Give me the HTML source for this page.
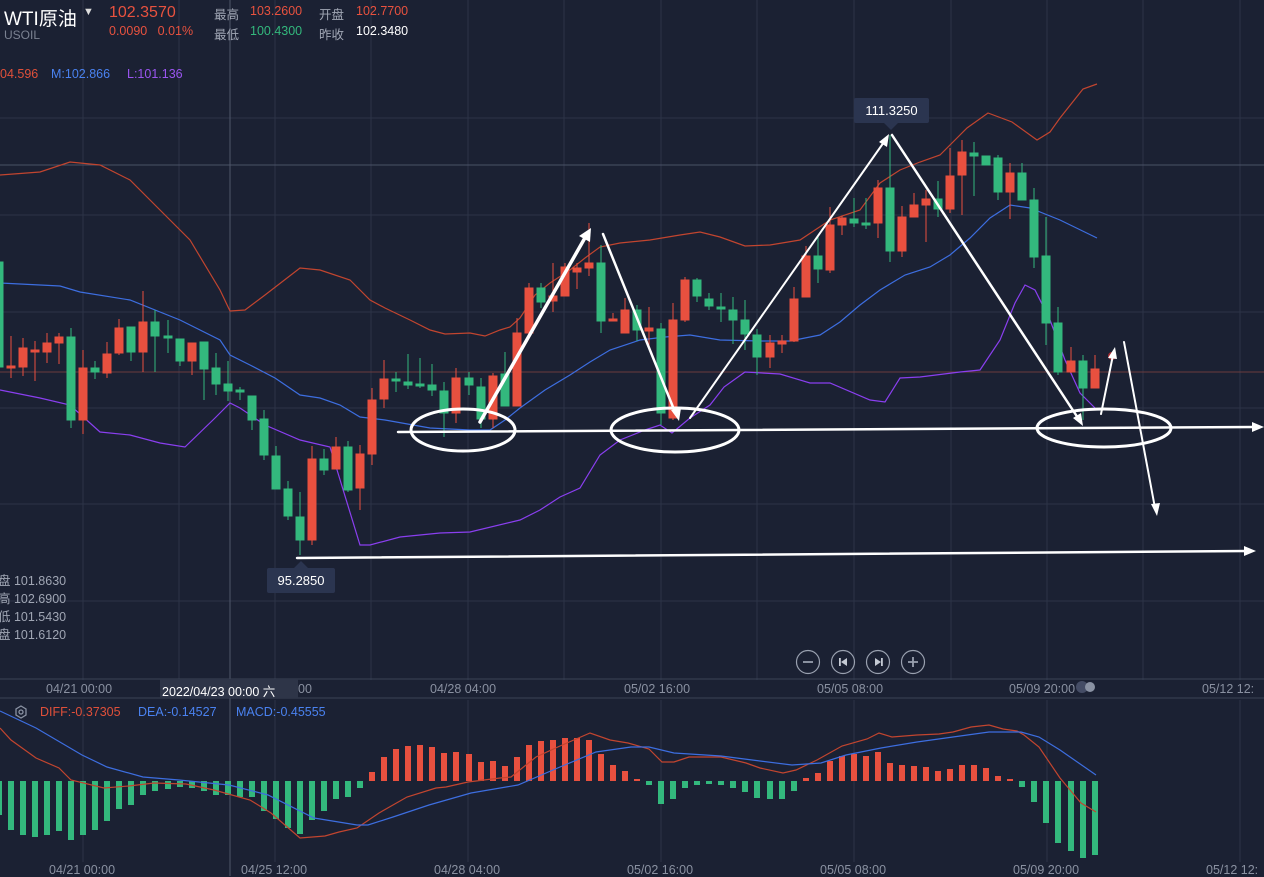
<!DOCTYPE html>
<html><head><meta charset="utf-8"><style>
html,body{margin:0;padding:0;background:#1b2133;}
body{width:1264px;height:876px;overflow:hidden;position:relative;font-family:"Liberation Sans","Noto Sans CJK SC",sans-serif;}
svg{position:absolute;left:0;top:0;}
.t{position:absolute;white-space:nowrap;font-size:13px;}
</style></head><body>
<svg width="1264" height="876" viewBox="0 0 1264 876">
<rect width="1264" height="876" fill="#1b2133"/>
<g stroke="#2c3447" stroke-width="1">
<path d="M83 0V680M179 0V680M275 0V680M371 0V680M468 0V680M564 0V680M661 0V680M757 0V680M854 0V680M951 0V680M1047 0V680M1143 0V680M1240 0V680"/>
<path d="M0 118H1264M0 215H1264M0 312H1264M0 408H1264M0 504H1264M0 601H1264"/>
<path d="M83 700V862M275 700V862M468 700V862M661 700V862M854 700V862M1047 700V862M1240 700V862"/>
</g>
<path d="M0 165H1264" stroke="#4a5266"/>
<path d="M230 0V876" stroke="#4f566a"/>
<path d="M0 372H1264" stroke="#6b3b3e"/>
<path d="M0 679H1264M0 698H1264" stroke="#3b4356"/>
<!-- bands -->
<polyline fill="none" stroke="#c2452f" stroke-width="1.2" points="0,175 40,172 70,162 100,165 130,180 160,210 190,240 220,290 230,311 245,310 265,295 300,268 320,270 350,280 370,300 385,308 410,320 430,330 445,334 470,333 485,336 500,330 510,327 520,318 535,295 550,283 570,270 585,258 600,247 620,243 650,240 680,235 700,232 720,237 745,246 770,245 800,240 830,220 860,210 880,183 900,170 920,162 940,155 955,140 967,128 988,113 1012,122 1037,140 1050,132 1060,118 1083,89 1097,84"/>
<polyline fill="none" stroke="#3d6ee0" stroke-width="1.2" points="0,283 60,286 80,292 130,300 180,320 220,340 230,355 250,365 275,378 300,395 320,398 340,405 360,417 385,420 430,428 470,430 490,430 505,420 520,408 545,390 570,375 590,362 610,350 640,340 665,337 690,335 720,340 760,341 790,341 820,335 840,322 860,305 880,290 905,275 930,267 950,255 970,238 990,218 1010,205 1030,208 1060,220 1097,238"/>
<polyline fill="none" stroke="#8a3ff0" stroke-width="1.2" points="0,390 40,398 70,405 100,432 130,435 160,443 185,447 215,418 230,403 240,408 265,425 300,440 330,447 360,545 370,545 400,537 440,533 470,532 520,520 540,510 560,497 580,488 600,455 620,440 645,430 660,425 672,433 690,418 710,405 724,387 745,372 780,374 810,383 830,383 870,400 885,402 900,378 920,377 960,372 980,370 1000,340 1015,303 1025,285 1035,290 1050,320 1065,360 1080,393 1097,410"/>
<!-- candles -->
<g id="c"></g>
<g stroke="#33b87d" fill="#33b87d">
<path d="M-1 255V370M71 328V428M95 361V379M131 327V361M155 310V372M168 320V353M180 339V366M204 342V400M216 353V395M228 361V401M240 387V400M252 396V430M264 410V460M276 446V489M288 481V520M300 492V555M324 449V475M348 441V492M396 372V392M408 354V389M420 358V388M432 364V396M444 382V437M469 372V395M481 378V428M505 352V406M541 283V308M601 245V333M637 305V341M661 323V425M697 278V302M709 293V310M721 293V322M733 297V344M745 300V350M757 329V375M818 237V283M854 198V227M866 198V229M890 135V262M938 181V217M974 142V196M986 156V165M998 155V200M1022 163V200M1034 188V268M1046 217V345M1058 307V375M1083 355V420"/>
<rect x="-5" y="262" width="8" height="105"/><rect x="67" y="337" width="8" height="83"/><rect x="91" y="368" width="8" height="4"/><rect x="127" y="327" width="8" height="25"/><rect x="151" y="322" width="8" height="14"/><rect x="164" y="336" width="8" height="2"/><rect x="176" y="339" width="8" height="22"/><rect x="200" y="342" width="8" height="27"/><rect x="212" y="368" width="8" height="16"/><rect x="224" y="384" width="8" height="7"/><rect x="236" y="390" width="8" height="2"/><rect x="248" y="396" width="8" height="24"/><rect x="260" y="419" width="8" height="36"/><rect x="272" y="456" width="8" height="33"/><rect x="284" y="489" width="8" height="27"/><rect x="296" y="517" width="8" height="23"/><rect x="320" y="459" width="8" height="11"/><rect x="344" y="447" width="8" height="43"/><rect x="392" y="379" width="8" height="2"/><rect x="404" y="382" width="8" height="3"/><rect x="416" y="384" width="8" height="2"/><rect x="428" y="385" width="8" height="5"/><rect x="440" y="391" width="8" height="22"/><rect x="465" y="378" width="8" height="7"/><rect x="477" y="387" width="8" height="32"/><rect x="501" y="374" width="8" height="32"/><rect x="537" y="288" width="8" height="14"/><rect x="597" y="263" width="8" height="58"/><rect x="633" y="310" width="8" height="20"/><rect x="657" y="329" width="8" height="84"/><rect x="693" y="280" width="8" height="16"/><rect x="705" y="299" width="8" height="7"/><rect x="717" y="307" width="8" height="2"/><rect x="729" y="310" width="8" height="10"/><rect x="741" y="320" width="8" height="14"/><rect x="753" y="335" width="8" height="22"/><rect x="814" y="256" width="8" height="13"/><rect x="850" y="219" width="8" height="4"/><rect x="862" y="223" width="8" height="2"/><rect x="886" y="188" width="8" height="63"/><rect x="934" y="199" width="8" height="10"/><rect x="970" y="153" width="8" height="3"/><rect x="982" y="156" width="8" height="9"/><rect x="994" y="158" width="8" height="34"/><rect x="1018" y="173" width="8" height="27"/><rect x="1030" y="200" width="8" height="57"/><rect x="1042" y="256" width="8" height="67"/><rect x="1054" y="323" width="8" height="49"/><rect x="1079" y="361" width="8" height="27"/>
</g>
<g stroke="#e8503f" fill="#e8503f">
<path d="M11 336V378M23 338V376M35 341V381M47 333V363M59 333V364M83 350V434M107 342V378M119 319V355M143 291V372M192 343V375M312 446V545M336 437V469M360 445V510M372 388V465M384 360V408M456 368V423M493 373V428M517 318V406M529 283V334M553 263V312M565 263V296M577 263V289M589 223V276M613 313V321M625 298V333M649 307V347M673 303V420M685 277V322M770 335V368M782 335V353M794 287V342M806 246V297M830 207V273M842 216V235M878 180V238M902 206V257M914 193V217M926 190V242M950 148V213M962 140V215M1010 163V219M1071 347V373M1095 355V388"/>
<rect x="7" y="366" width="8" height="2"/><rect x="19" y="348" width="8" height="19"/><rect x="31" y="350" width="8" height="2"/><rect x="43" y="343" width="8" height="9"/><rect x="55" y="337" width="8" height="6"/><rect x="79" y="368" width="8" height="52"/><rect x="103" y="354" width="8" height="19"/><rect x="115" y="328" width="8" height="25"/><rect x="139" y="322" width="8" height="30"/><rect x="188" y="343" width="8" height="18"/><rect x="308" y="459" width="8" height="81"/><rect x="332" y="447" width="8" height="22"/><rect x="356" y="454" width="8" height="34"/><rect x="368" y="400" width="8" height="54"/><rect x="380" y="379" width="8" height="20"/><rect x="452" y="378" width="8" height="35"/><rect x="489" y="376" width="8" height="43"/><rect x="513" y="333" width="8" height="73"/><rect x="525" y="288" width="8" height="45"/><rect x="549" y="296" width="8" height="5"/><rect x="561" y="267" width="8" height="29"/><rect x="573" y="268" width="8" height="4"/><rect x="585" y="263" width="8" height="5"/><rect x="609" y="319" width="8" height="2"/><rect x="621" y="310" width="8" height="23"/><rect x="645" y="328" width="8" height="3"/><rect x="669" y="320" width="8" height="98"/><rect x="681" y="280" width="8" height="40"/><rect x="766" y="343" width="8" height="14"/><rect x="778" y="341" width="8" height="3"/><rect x="790" y="299" width="8" height="42"/><rect x="802" y="256" width="8" height="41"/><rect x="826" y="225" width="8" height="45"/><rect x="838" y="218" width="8" height="7"/><rect x="874" y="188" width="8" height="35"/><rect x="898" y="217" width="8" height="34"/><rect x="910" y="205" width="8" height="12"/><rect x="922" y="199" width="8" height="6"/><rect x="946" y="176" width="8" height="33"/><rect x="958" y="152" width="8" height="23"/><rect x="1006" y="173" width="8" height="19"/><rect x="1067" y="361" width="8" height="11"/><rect x="1091" y="369" width="8" height="19"/>
</g>
<circle cx="1112" cy="356" r="4" fill="#ff3030" opacity="0.6"/>
<!-- annotations -->
<g stroke="#ffffff" fill="none" stroke-linecap="round">
<ellipse cx="463" cy="430" rx="52" ry="21" stroke-width="3"/>
<ellipse cx="675" cy="430" rx="64" ry="22" stroke-width="3"/>
<ellipse cx="1104" cy="428" rx="67" ry="19" stroke-width="3"/>
<path d="M398 432L1255 427" stroke-width="2.5"/>
<path d="M297 558L1248 551" stroke-width="2.5"/>
<path d="M480 422L586 236" stroke-width="3.5"/>
<path d="M603 234L675 412" stroke-width="2.5"/>
<path d="M690 418L884 142" stroke-width="2"/>
<path d="M892 135L1078 418" stroke-width="2.5"/>
<path d="M1101 414L1113 355" stroke-width="2"/>
<path d="M1124 342L1155 508" stroke-width="2"/>
</g>
<g fill="#ffffff">
<path d="M1264 427L1252 422L1252 432Z"/>
<path d="M1256 551L1244 546L1244 556Z"/>
<path d="M591 228L579 236L590 242Z"/>
<path d="M679 421L671 410L681 408Z"/>
<path d="M889 134L879 142L887 147Z"/>
<path d="M1083 426L1073 418L1081 413Z"/>
<path d="M1115 347L1108 358L1117 359Z"/>
<path d="M1157 516L1151 504L1160 503Z"/>
</g>
<rect x="854" y="98" width="75" height="25" rx="2" fill="#2b3550"/>
<path d="M884 123L891 130L898 123Z" fill="#2b3550"/>
<rect x="267" y="568" width="68" height="25" rx="2" fill="#2b3550"/>
<path d="M294 568L301 561L308 568Z" fill="#2b3550"/>
<!-- buttons -->
<g stroke="#9aa1b0" stroke-width="1.2" fill="none">
<circle cx="808" cy="662" r="11.5"/><circle cx="843" cy="662" r="11.5"/><circle cx="878" cy="662" r="11.5"/><circle cx="913" cy="662" r="11.5"/>
<path d="M803 662H813M908 662H918M913 657V667" stroke-width="1.8"/>
</g>
<g fill="#c5cad4"><rect x="839" y="658" width="1.8" height="8"/><path d="M847 658V666L841 662Z"/><rect x="881" y="658" width="1.8" height="8"/><path d="M875 658V666L881 662Z"/></g>
<circle cx="1082" cy="687" r="6" fill="#55607a" opacity="0.7"/><circle cx="1090" cy="687" r="5" fill="#8a92a3"/>
<!-- MACD -->
<g fill="#33b87d">
<rect x="-4" y="781" width="6" height="34"/><rect x="8" y="781" width="6" height="49"/><rect x="20" y="781" width="6" height="54"/><rect x="32" y="781" width="6" height="56"/><rect x="44" y="781" width="6" height="54"/><rect x="56" y="781" width="6" height="50"/><rect x="68" y="781" width="6" height="59"/><rect x="80" y="781" width="6" height="54"/><rect x="92" y="781" width="6" height="49"/><rect x="104" y="781" width="6" height="40"/><rect x="116" y="781" width="6" height="28"/><rect x="128" y="781" width="6" height="24"/><rect x="140" y="781" width="6" height="14"/><rect x="152" y="781" width="6" height="10"/><rect x="165" y="781" width="6" height="8"/><rect x="177" y="781" width="6" height="6"/><rect x="189" y="781" width="6" height="7"/><rect x="201" y="781" width="6" height="10"/><rect x="213" y="781" width="6" height="14"/><rect x="225" y="781" width="6" height="14"/><rect x="237" y="781" width="6" height="16"/><rect x="249" y="781" width="6" height="16"/><rect x="261" y="781" width="6" height="30"/><rect x="273" y="781" width="6" height="38"/><rect x="285" y="781" width="6" height="47"/><rect x="297" y="781" width="6" height="53"/><rect x="309" y="781" width="6" height="39"/><rect x="321" y="781" width="6" height="30"/><rect x="333" y="781" width="6" height="18"/><rect x="345" y="781" width="6" height="16"/><rect x="357" y="781" width="6" height="7"/>
<rect x="646" y="781" width="6" height="4"/><rect x="658" y="781" width="6" height="23"/><rect x="670" y="781" width="6" height="18"/><rect x="682" y="781" width="6" height="7"/><rect x="694" y="781" width="6" height="4"/><rect x="706" y="781" width="6" height="3"/><rect x="718" y="781" width="6" height="4"/><rect x="730" y="781" width="6" height="7"/><rect x="742" y="781" width="6" height="11"/><rect x="754" y="781" width="6" height="17"/><rect x="767" y="781" width="6" height="18"/><rect x="779" y="781" width="6" height="18"/><rect x="791" y="781" width="6" height="10"/>
<rect x="1019" y="781" width="6" height="6"/><rect x="1031" y="781" width="6" height="21"/><rect x="1043" y="781" width="6" height="42"/><rect x="1055" y="781" width="6" height="62"/><rect x="1068" y="781" width="6" height="70"/><rect x="1080" y="781" width="6" height="77"/><rect x="1092" y="781" width="6" height="74"/>
</g>
<g fill="#e8503f">
<rect x="369" y="772" width="6" height="9"/><rect x="381" y="757" width="6" height="24"/><rect x="393" y="749" width="6" height="32"/><rect x="405" y="746" width="6" height="35"/><rect x="417" y="745" width="6" height="36"/><rect x="429" y="747" width="6" height="34"/><rect x="441" y="753" width="6" height="28"/><rect x="453" y="752" width="6" height="29"/><rect x="466" y="754" width="6" height="27"/><rect x="478" y="762" width="6" height="19"/><rect x="490" y="761" width="6" height="20"/><rect x="502" y="766" width="6" height="15"/><rect x="514" y="757" width="6" height="24"/><rect x="526" y="745" width="6" height="36"/><rect x="538" y="741" width="6" height="40"/><rect x="550" y="740" width="6" height="41"/><rect x="562" y="738" width="6" height="43"/><rect x="574" y="738" width="6" height="43"/><rect x="586" y="740" width="6" height="41"/><rect x="598" y="754" width="6" height="27"/><rect x="610" y="765" width="6" height="16"/><rect x="622" y="771" width="6" height="10"/><rect x="634" y="779" width="6" height="2"/>
<rect x="803" y="778" width="6" height="3"/><rect x="815" y="773" width="6" height="8"/><rect x="827" y="761" width="6" height="20"/><rect x="839" y="756" width="6" height="25"/><rect x="851" y="754" width="6" height="27"/><rect x="863" y="756" width="6" height="25"/><rect x="875" y="752" width="6" height="29"/><rect x="887" y="763" width="6" height="18"/><rect x="899" y="765" width="6" height="16"/><rect x="911" y="766" width="6" height="15"/><rect x="923" y="767" width="6" height="14"/><rect x="935" y="771" width="6" height="10"/><rect x="947" y="769" width="6" height="12"/><rect x="959" y="765" width="6" height="16"/><rect x="971" y="765" width="6" height="16"/><rect x="983" y="768" width="6" height="13"/><rect x="995" y="776" width="6" height="5"/><rect x="1007" y="779" width="6" height="2"/>
</g>
<polyline fill="none" stroke="#c2452f" stroke-width="1.2" points="0,728 11,740 36,758 59,768 71,780 104,788 129,786 154,783 186,784 214,790 250,800 271,813 300,838 325,836 339,832 357,828 379,813 407,797 436,788 446,787 468,782 500,778 511,777 536,757 560,746 590,733 610,740 628,743 649,749 662,762 674,762 689,757 721,757 746,763 760,768 783,773 796,770 817,760 842,746 867,739 879,733 892,737 917,735 939,734 953,732 971,727 989,725 1003,729 1017,731 1024,735 1039,747 1060,778 1081,803 1096,812"/>
<polyline fill="none" stroke="#3d6ee0" stroke-width="1.2" points="0,711 36,728 82,755 107,767 143,777 179,780 229,785 268,795 314,818 357,825 368,825 393,817 429,805 471,793 518,785 560,767 596,752 631,747 649,747 674,753 721,756 760,761 792,765 821,763 846,755 881,748 917,742 953,737 989,732 1021,732 1039,737 1060,750 1096,775"/>
<g fill="none" stroke="#8a92a3" stroke-width="1.3"><path d="M21 706L26 709V715L21 718L16 715V709Z"/><circle cx="21" cy="712" r="2"/></g>
<rect x="160" y="679" width="138" height="19" fill="#2e3548"/>
</svg>
<div class="t" style="left:4px;top:4px;font-size:19px;color:#fff;">WTI原油</div>
<div class="t" style="left:83px;top:6px;font-size:11px;color:#ddd;">▼</div>
<div class="t" style="left:109px;top:4px;font-size:16px;color:#e8523f;">102.3570</div>
<div class="t" style="left:4px;top:28px;font-size:12px;color:#7b8292;">USOIL</div>
<div class="t" style="left:109px;top:24px;font-size:12.5px;color:#e8523f;">0.0090&nbsp;&nbsp;&nbsp;0.01%</div>
<div class="t" style="left:214px;top:4px;font-size:12.5px;color:#a0a6b4;">最高</div>
<div class="t" style="left:250px;top:4px;font-size:12.5px;color:#e8523f;">103.2600</div>
<div class="t" style="left:319px;top:4px;font-size:12.5px;color:#a0a6b4;">开盘</div>
<div class="t" style="left:356px;top:4px;font-size:12.5px;color:#e8523f;">102.7700</div>
<div class="t" style="left:214px;top:24px;font-size:12.5px;color:#a0a6b4;">最低</div>
<div class="t" style="left:250px;top:24px;font-size:12.5px;color:#33b87d;">100.4300</div>
<div class="t" style="left:319px;top:24px;font-size:12.5px;color:#a0a6b4;">昨收</div>
<div class="t" style="left:356px;top:24px;font-size:12.5px;color:#fff;">102.3480</div>
<div class="t" style="left:0px;top:67px;font-size:12.5px;color:#e0503a;">04.596</div>
<div class="t" style="left:51px;top:67px;font-size:12.5px;color:#4a82f0;">M:102.866</div>
<div class="t" style="left:127px;top:67px;font-size:12.5px;color:#9a55f0;">L:101.136</div>
<div class="t" style="left:-2px;top:572px;font-size:12.5px;color:#a0a6b4;line-height:18px;">盘 101.8630<br>高 102.6900<br>低 101.5430<br>盘 101.6120</div>
<div class="t" style="left:855px;top:103px;width:73px;text-align:center;font-size:13px;color:#fff;">111.3250</div>
<div class="t" style="left:267px;top:573px;width:68px;text-align:center;font-size:13px;color:#fff;">95.2850</div>
<div class="t" style="left:46px;top:682px;font-size:12.5px;color:#8a91a1;">04/21 00:00</div>
<div class="t" style="left:298px;top:682px;font-size:12.5px;color:#8a91a1;">00</div>
<div class="t" style="left:162px;top:681px;font-size:12.5px;color:#fff;">2022/04/23 00:00 六</div>
<div class="t" style="left:430px;top:682px;font-size:12.5px;color:#8a91a1;">04/28 04:00</div>
<div class="t" style="left:624px;top:682px;font-size:12.5px;color:#8a91a1;">05/02 16:00</div>
<div class="t" style="left:817px;top:682px;font-size:12.5px;color:#8a91a1;">05/05 08:00</div>
<div class="t" style="left:1009px;top:682px;font-size:12.5px;color:#8a91a1;">05/09 20:00</div>
<div class="t" style="left:1202px;top:682px;font-size:12.5px;color:#8a91a1;">05/12 12:</div>
<div class="t" style="left:40px;top:705px;font-size:12.5px;color:#e0503a;">DIFF:-0.37305</div>
<div class="t" style="left:138px;top:705px;font-size:12.5px;color:#4a82f0;">DEA:-0.14527</div>
<div class="t" style="left:236px;top:705px;font-size:12.5px;color:#4a82f0;">MACD:-0.45555</div>
<div class="t" style="left:49px;top:863px;font-size:12.5px;color:#8a91a1;">04/21 00:00</div>
<div class="t" style="left:241px;top:863px;font-size:12.5px;color:#8a91a1;">04/25 12:00</div>
<div class="t" style="left:434px;top:863px;font-size:12.5px;color:#8a91a1;">04/28 04:00</div>
<div class="t" style="left:627px;top:863px;font-size:12.5px;color:#8a91a1;">05/02 16:00</div>
<div class="t" style="left:820px;top:863px;font-size:12.5px;color:#8a91a1;">05/05 08:00</div>
<div class="t" style="left:1013px;top:863px;font-size:12.5px;color:#8a91a1;">05/09 20:00</div>
<div class="t" style="left:1206px;top:863px;font-size:12.5px;color:#8a91a1;">05/12 12:</div>
</body></html>
